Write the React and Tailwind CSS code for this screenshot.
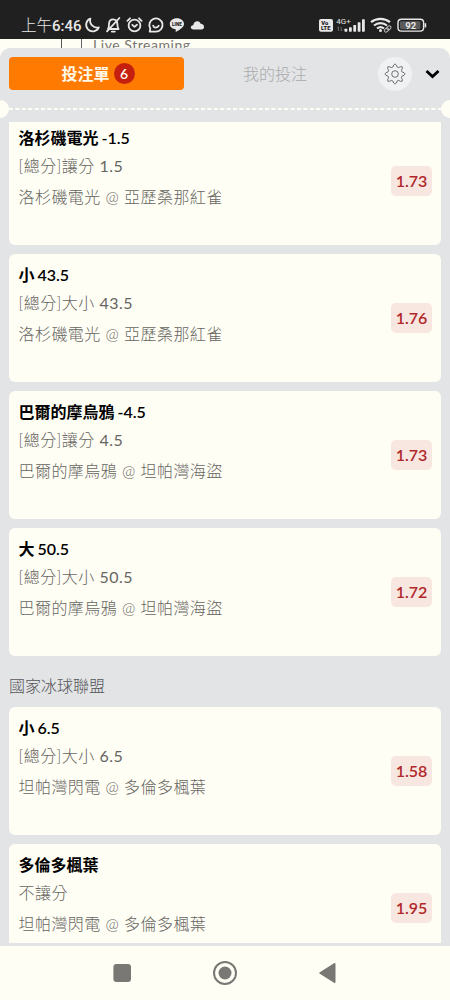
const UI_FONT = "font-['Lato','Noto_Sans_CJK_TC',sans-serif]"

const footballBets = [
  { id: 1, pick: "洛杉磯電光 -1.5", market: "[總分]讓分 1.5", match: "洛杉磯電光 @ 亞歷桑那紅雀", odds: "1.73" },
  { id: 2, pick: "小 43.5", market: "[總分]大小 43.5", match: "洛杉磯電光 @ 亞歷桑那紅雀", odds: "1.76" },
  { id: 3, pick: "巴爾的摩烏鴉 -4.5", market: "[總分]讓分 4.5", match: "巴爾的摩烏鴉 @ 坦帕灣海盜", odds: "1.73" },
  { id: 4, pick: "大 50.5", market: "[總分]大小 50.5", match: "巴爾的摩烏鴉 @ 坦帕灣海盜", odds: "1.72" },
]

const hockeyBets = [
  { id: 5, pick: "小 6.5", market: "[總分]大小 6.5", match: "坦帕灣閃電 @ 多倫多楓葉", odds: "1.58" },
  { id: 6, pick: "多倫多楓葉", market: "不讓分", match: "坦帕灣閃電 @ 多倫多楓葉", odds: "1.95" },
]

// light Chinese text, regular weight for the numbers
function MixedText({ children }) {
  return children.split(/([\d.]+)/).map((part, i) => (
    i % 2 ? <span key={i} className="font-normal">{part}</span> : part
  ))
}

function StatusIcons() {
  return (
    <svg width="122" height="18" viewBox="0 0 122 18" fill="none" stroke="#e8e8e8" strokeWidth="1.8" strokeLinecap="round" strokeLinejoin="round">
      {/* do not disturb */}
      <path d="M6.4 2.6A6.6 6.6 0 1 0 14.8 11.4A7 7 0 0 1 6.4 2.6Z" />
      {/* muted bell */}
      <path d="M24 13H34.6C33.4 11.6 33.4 10.2 33.4 8.2C33.4 5.2 31.8 3.3 29.1 3.3C26.4 3.3 25 5.2 25 8.2C25 10.2 25 11.6 24 13ZM27.8 15.6H30.8M35.4 2L23 15.4" />
      {/* alarm */}
      <circle cx="50.5" cy="9.5" r="5.9" />
      <path d="M43.4 4.8L46 2.3M57.6 4.8L55 2.3M48.3 8.8L50.5 10.8L53 8.8" />
      {/* chat */}
      <path d="M65.7 15.6H72A6.6 6.6 0 1 0 66.3 12.4Z" />
      <path d="M69.2 9.7C70 12.2 73.6 12.2 74.8 9.7" />
      {/* LINE */}
      <path d="M92.9 2.3C88.7 2.3 85.8 4.8 85.8 8C85.8 11 88.4 12.9 91.7 13.3V16C95.2 14 100 11.4 100 8C100 4.8 97 2.3 92.9 2.3Z" fill="#e8e8e8" stroke="none" />
      <text x="92.9" y="9.6" textAnchor="middle" fill="#202020" stroke="none" fontSize="4.6" fontWeight="900" fontFamily="Roboto, sans-serif">LINE</text>
      {/* cloud */}
      <path d="M109.4 13.4C106.2 13.4 105.8 9.6 109.2 9.2C109.8 4.5 115.5 4.1 116.7 7.8C120.8 7.8 121.1 13.4 118 13.4Z" fill="#e8e8e8" stroke="none" />
    </svg>
  )
}

function SignalIcons() {
  return (
    <svg width="112" height="18" viewBox="0 0 112 18" fill="#e8e8e8">
      {/* VoLTE */}
      <rect x="1" y="3" width="14" height="12.8" rx="2" />
      <g fill="#202020" fontFamily="Roboto, sans-serif" fontWeight="900" fontSize="5.8">
        <text x="3.2" y="8.8">Vo</text>
        <text x="3" y="14.4">LTE</text>
      </g>
      {/* cell signal */}
      <text x="18.2" y="7.8" fontFamily="Roboto, sans-serif" fontSize="8" fontWeight="400">4G+</text>
      <path d="M20.5 15V10.8L19.3 12.2M23.2 10.8V15L24.4 13.6" fill="none" stroke="#777" strokeWidth=".8" />
      <rect x="26.5" y="12.7" width="2.8" height="3" rx=".6" />
      <rect x="31" y="11.2" width="2.8" height="4.5" rx=".6" />
      <rect x="35.3" y="8.9" width="2.8" height="6.8" rx=".6" />
      <rect x="39.7" y="6.2" width="2.8" height="9.5" rx=".6" />
      <rect x="44" y="3.2" width="2.8" height="12.5" rx=".6" />
      {/* wifi + link */}
      <g fill="none" stroke="#e8e8e8" strokeWidth="2.2">
        <path d="M53 6.2C58.5 1.7 66.5 1.7 72 6.2" />
        <path d="M56 9.5C59.8 6.4 65.2 6.4 69 9.5" />
        <path d="M59 12.5C61.2 10.8 63.8 10.8 66 12.5" />
      </g>
      <circle cx="62.5" cy="14.5" r="1.5" />
      <g fill="none" stroke="#bbb" strokeWidth="1" transform="rotate(-42 69.7 13)">
        <rect x="65.8" y="11.3" width="4.6" height="3.3" rx="1.6" />
        <rect x="69" y="11.3" width="4.6" height="3.3" rx="1.6" />
      </g>
      {/* battery */}
      <rect x="80" y="3.3" width="25.6" height="11.8" rx="3.4" fill="#202020" stroke="#e8e8e8" strokeWidth="1.4" />
      <rect x="82" y="5.2" width="20.4" height="8" rx="1.4" fill="#5a5a5a" />
      <path d="M107.4 7.2V11.4" stroke="#e8e8e8" strokeWidth="1.6" />
      <text x="92.8" y="12.7" textAnchor="middle" fontFamily="Roboto, sans-serif" fontWeight="700" fontSize="9.5">92</text>
    </svg>
  )
}

function GearIcon() {
  return (
    <svg width="22" height="22" viewBox="0 0 22 22" fill="none" stroke="#606164" strokeWidth=".9" strokeLinejoin="round">
      <path d="M9.7 2Q11 -.2 12.3 2L13 3.9L14.7 4.6L16.5 3.7Q19.1 3 18.3 5.5L17.4 7.3L18.1 9L20 9.7Q22.2 11 20 12.3L18.1 13L17.4 14.7L18.3 16.5Q19.1 19 16.5 18.3L14.7 17.4L13 18.1L12.3 20Q11 22.2 9.7 20L9 18.1L7.3 17.4L5.5 18.3Q3 19.1 3.7 16.5L4.6 14.7L3.9 13L2 12.3Q-.2 11 2 9.7L3.9 9L4.6 7.3L3.7 5.5Q3 3 5.5 3.7L7.3 4.6L9 3.9Z" />
      <circle cx="11" cy="11" r="3.3" />
    </svg>
  )
}

function BetCard({ bet }) {
  return (
    <article className="flex h-32 shrink-0 items-center justify-between rounded-md bg-[#fffef5] pr-[9px] pl-[9.5px]">
      <div className="h-full pt-[9px]">
        <h3 className="h-6 text-base leading-6 font-semibold [word-spacing:-1px] whitespace-nowrap text-black">{bet.pick}</h3>
        <p className="mt-[4px] h-6 text-base leading-6 font-light tracking-[0.45px] whitespace-nowrap text-[#666561]"><MixedText>{bet.market}</MixedText></p>
        <p className="mt-[7px] h-6 text-base leading-6 font-light tracking-[0.45px] whitespace-nowrap text-[#666561]">{bet.match}</p>
      </div>
      <span className="flex h-[30px] w-[41px] items-center justify-center rounded-[5px] bg-[#f8e6e0] text-base font-semibold text-[#b1272a]">{bet.odds}</span>
    </article>
  )
}

export default function App() {
  return (
    <main className={`flex h-[1000px] w-[450px] flex-col overflow-hidden bg-[#fffef5] ${UI_FONT}`}>
      <header className="flex h-[39px] shrink-0 items-start bg-[#202020] pt-4 text-[#e8e8e8]">
        <span className="ml-[21px] w-[63px] text-base leading-[19px] whitespace-nowrap font-['Roboto','Noto_Sans_CJK_TC',sans-serif]"><span className="text-[15.5px] font-light">上午</span><span className="text-[15px] font-medium">6:46</span></span>
        <StatusIcons />
        <span className="ml-[112px]"><SignalIcons /></span>
      </header>

      {/* page behind the slip */}
      <div className="flex h-[9px] shrink-0 overflow-hidden">
        <span className="ml-[61px] h-full w-px bg-[#555]" />
        <span className="ml-[19px] h-full w-px bg-[#666]" />
        <span className="ml-[11px] -mt-[3px] text-sm leading-[18px] tracking-[0.55px] whitespace-nowrap text-[#777672]">Live Streaming</span>
      </div>

      <section className="flex h-[898px] shrink-0 flex-col rounded-t-[10px] bg-[#e3e4e6]">
        <div className="flex h-[51px] shrink-0 items-center pl-[9px]">
          <button className="flex h-[33px] w-[175px] items-center justify-center gap-1 rounded-[4px] bg-[#ff7a00] pl-[3px] text-base font-bold text-[#fff8e8]">
            投注單
            <span className="flex size-[21px] items-center justify-center rounded-full bg-[#c51f10] text-sm font-semibold">6</span>
          </button>
          <button className="w-[182px] text-base font-light text-[#aaabad]">我的投注</button>
          <button className="ml-[12px] flex size-[34px] items-center justify-center rounded-full bg-[#f0f1f3]"><GearIcon /></button>
          <svg className="ml-[13px]" width="15" height="10" viewBox="0 0 15 10" fill="none" stroke="#000" strokeWidth="2.8">
            <path d="M1.5 2L7.5 7.5L13.5 2" />
          </svg>
        </div>

        {/* ticket perforation */}
        <div className="flex h-[19px] shrink-0 items-center">
          <span className="h-[18px] w-[9px] rounded-r-full bg-[#fffef5]" />
          <svg className="flex-1" height="3" width="432"><path d="M0 2H432" stroke="#fffef5" strokeWidth="2" strokeDasharray="4 2.4" /></svg>
          <span className="h-[18px] w-[9px] rounded-l-full bg-[#fffef5]" />
        </div>

        <div className="mt-[4px] h-[821px] shrink-0 overflow-hidden px-[9px]">
          <div className="-mt-[5px] flex flex-col gap-[9px]">
            {footballBets.map(bet => <BetCard key={bet.id} bet={bet} />)}
          </div>
          <h2 className="h-[51px] pt-[18px] text-base leading-6 font-light text-[#555659]">國家冰球聯盟</h2>
          <div className="flex flex-col gap-[9px]">
            {hockeyBets.map(bet => <BetCard key={bet.id} bet={bet} />)}
          </div>
        </div>
      </section>

      <nav className="flex flex-1 items-center justify-center bg-[#fffef5]">
        <svg width="224" height="26" viewBox="0 0 224 26" fill="#797874">
          <rect x=".4" y="4" width="17.6" height="18" rx="3" />
          <circle cx="112" cy="13" r="11" fill="none" stroke="#797874" strokeWidth="2" />
          <circle cx="112" cy="13" r="6.5" />
          <path d="M206.8 12.2L221 3.2Q222.5 2.5 222.5 4V22Q222.5 23.5 221 22.8L206.8 13.8Q205.4 13 206.8 12.2Z" />
        </svg>
      </nav>
    </main>
  )
}
